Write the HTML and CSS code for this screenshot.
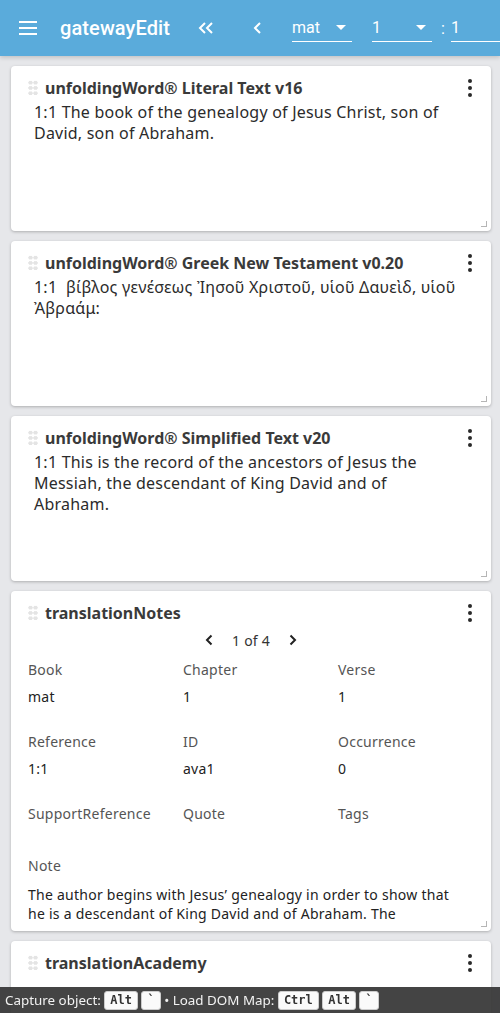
FILE: index.html
```html
<!DOCTYPE html>
<html>
<head>
<meta charset="utf-8">
<link rel="stylesheet" href="styles.css">
</head>
<body>
<header class="appbar">
  <svg class="menu" width="18" height="14" viewBox="0 0 18 14"><path d="M0 1h18M0 7h18M0 13h18" stroke="#fff" stroke-width="2"/></svg>
  <div class="brand">gatewayEdit</div>
  <svg class="dbl" width="16" height="12" viewBox="0 0 16 12"><path d="M7 1L2 6l5 5M14 1L9 6l5 5" fill="none" stroke="#fff" stroke-width="2"/></svg>
  <svg class="sgl" width="8" height="12" viewBox="0 0 8 12"><path d="M7 1L2 6l5 5" fill="none" stroke="#fff" stroke-width="2"/></svg>
  <div class="sel s1"><span>mat</span><i class="tri"></i></div>
  <div class="sel s2"><span>1</span><i class="tri"></i></div>
  <span class="colon">:</span>
  <div class="sel s3"><span>1</span></div>
</header>

<main class="cards">
  <section class="card">
    <div class="card-head">
      <span class="grip"></span>
      <h2>unfoldingWord® Literal Text v16</h2>
      <span class="kebab"><i></i><i></i><i></i></span>
    </div>
    <p class="verse">1:1 The book of the genealogy of Jesus Christ, son of David, son of Abraham.</p>
    <span class="resize"></span>
  </section>

  <section class="card">
    <div class="card-head">
      <span class="grip"></span>
      <h2>unfoldingWord® Greek New Testament v0.20</h2>
      <span class="kebab"><i></i><i></i><i></i></span>
    </div>
    <p class="verse">1:1&nbsp; βίβλος γενέσεως Ἰησοῦ Χριστοῦ, υἱοῦ Δαυεὶδ, υἱοῦ Ἀβραάμ:</p>
    <span class="resize"></span>
  </section>

  <section class="card">
    <div class="card-head">
      <span class="grip"></span>
      <h2>unfoldingWord® Simplified Text v20</h2>
      <span class="kebab"><i></i><i></i><i></i></span>
    </div>
    <p class="verse">1:1 This is the record of the ancestors of Jesus the Messiah, the descendant of King David and of Abraham.</p>
    <span class="resize"></span>
  </section>

  <section class="card notes">
    <div class="card-head">
      <span class="grip"></span>
      <h2>translationNotes</h2>
      <span class="kebab"><i></i><i></i><i></i></span>
    </div>
    <div class="pager">
      <svg width="8" height="12" viewBox="0 0 8 12"><path d="M6.5 1.5L2 6l4.5 4.5" fill="none" stroke="#222" stroke-width="2"/></svg>
      <span>1 of 4</span>
      <svg width="8" height="12" viewBox="0 0 8 12"><path d="M1.5 1.5L6 6l-4.5 4.5" fill="none" stroke="#222" stroke-width="2"/></svg>
    </div>
    <div class="fields">
      <div class="field"><div class="lbl">Book</div><div class="val">mat</div></div>
      <div class="field"><div class="lbl">Chapter</div><div class="val">1</div></div>
      <div class="field"><div class="lbl">Verse</div><div class="val">1</div></div>
      <div class="field"><div class="lbl">Reference</div><div class="val">1:1</div></div>
      <div class="field"><div class="lbl">ID</div><div class="val">ava1</div></div>
      <div class="field"><div class="lbl">Occurrence</div><div class="val">0</div></div>
      <div class="field"><div class="lbl">SupportReference</div><div class="val"></div></div>
      <div class="field"><div class="lbl">Quote</div><div class="val"></div></div>
      <div class="field"><div class="lbl">Tags</div><div class="val"></div></div>
    </div>
    <div class="note">
      <div class="lbl">Note</div>
      <p class="note-text">The author begins with Jesus’ genealogy in order to show that he is a descendant of King David and of Abraham. The</p>
    </div>
    <span class="resize"></span>
  </section>

  <section class="card">
    <div class="card-head">
      <span class="grip"></span>
      <h2>translationAcademy</h2>
      <span class="kebab"><i></i><i></i><i></i></span>
    </div>
  </section>
</main>

<div class="hotkeys">Capture object: <kbd>Alt</kbd> <kbd>`</kbd> • Load DOM Map: <kbd>Ctrl</kbd> <kbd>Alt</kbd> <kbd>`</kbd></div>
</body>
</html>
```
FILE: styles.css
```css
html, body {
  margin: 0;
  padding: 0;
}
body {
  background: #e6e7ea;
  font-family: "Noto Sans", "Open Sans", sans-serif;
  color: #2b2b2b;
  width: 500px;
  height: 1013px;
  overflow: hidden;
}
.appbar {
  height: 56px;
  background: #5aabdb;
  display: flex;
  align-items: center;
  color: #fff;
  font-family: Roboto, sans-serif;
  white-space: nowrap;
  box-shadow: 0 2px 4px rgba(0,0,0,0.15);
}
.menu { margin-left: 19px; flex: none; }
.brand {
  margin-left: 23px;
  font-size: 20px;
  font-weight: 500;
  letter-spacing: 0.1px;
}
.dbl { margin-left: 28px; flex: none; }
.sgl { margin-left: 39px; flex: none; }
.sel {
  height: 26px;
  border-bottom: 1px solid #fff;
  display: flex;
  align-items: center;
  justify-content: space-between;
  font-size: 16px;
  flex: none;
  padding-bottom: 2px;
  box-sizing: border-box;
  position: relative;
  top: 1px;
}
.sel span { line-height: 20px; }
.s1 { width: 60px; margin-left: 31px; padding-right: 6px; }
.s2 { width: 60px; margin-left: 20px; padding-right: 6px; }
.s3 { width: 60px; margin-left: 6px; }
.tri {
  width: 0;
  height: 0;
  border-left: 5px solid transparent;
  border-right: 5px solid transparent;
  border-top: 5px solid #fff;
}
.colon { margin-left: 9px; font-size: 16px; }

.cards {
  display: flex;
  flex-direction: column;
  gap: 10px;
  padding: 10px 9px 0 11px;
}
.card {
  position: relative;
  background: #fff;
  border-radius: 4px;
  box-shadow: 0 1px 3px rgba(0,0,0,0.25);
  height: 165px;
  box-sizing: border-box;
  padding: 10px 0 0 0;
  overflow: hidden;
  flex: none;
}
.card.notes { height: 340px; }
.card-head {
  display: flex;
  align-items: center;
  height: 24px;
  padding-left: 17px;
  padding-right: 19px;
}
.grip {
  width: 10px;
  height: 16px;
  flex: none;
  background-image: radial-gradient(circle, #e4e4e4 2px, transparent 2.2px);
  background-size: 5px 5.3px;
  margin-right: 7px;
}
.card-head h2 {
  margin: 0;
  font-size: 16px;
  font-weight: 700;
  color: #3a3a3a;
  flex: 1;
  white-space: nowrap;
  line-height: 24px;
}
.kebab {
  display: flex;
  flex-direction: column;
  gap: 3px;
  width: 4px;
  flex: none;
}
.kebab i {
  display: block;
  width: 4px;
  height: 4px;
  border-radius: 50%;
  background: #2a2a2a;
}
.verse {
  margin: 2px 26px 0 23px;
  font-size: 16px;
  line-height: 21px;
  letter-spacing: 0.22px;
  color: #2b2b2b;
}
.resize {
  position: absolute;
  right: 4px;
  bottom: 4px;
  width: 5px;
  height: 5px;
  border-right: 1px solid #b5b5b5;
  border-bottom: 1px solid #b5b5b5;
}
.pager {
  display: flex;
  justify-content: center;
  align-items: center;
  gap: 19px;
  margin-top: 4px;
  height: 22px;
  font-size: 14px;
  letter-spacing: 0.2px;
  color: #333;
}
.fields {
  display: grid;
  grid-template-columns: 155px 155px 155px;
  padding-left: 17px;
  row-gap: 26px;
  margin-top: 9px;
}
.field .lbl { height: 27px; }
.lbl {
  font-size: 14px;
  line-height: 19px;
  letter-spacing: 0.25px;
  color: #555;
}
.val {
  font-size: 14px;
  line-height: 19px;
  height: 19px;
  letter-spacing: 0.25px;
  color: #222;
}
.note {
  padding-left: 17px;
  padding-right: 30px;
  margin-top: 6px;
}
.note .lbl { margin-bottom: 10px; }
.note-text {
  margin: 0;
  font-size: 14px;
  line-height: 19px;
  letter-spacing: 0.25px;
  color: #222;
}
.hotkeys {
  position: fixed;
  left: 0;
  right: 0;
  bottom: 0;
  height: 26px;
  background: rgba(52,52,52,0.92);
  color: #f2f2f2;
  font-size: 13.4px;
  line-height: 26px;
  padding-left: 5px;
  white-space: nowrap;
}
kbd {
  display: inline-block;
  background: #fafafa;
  color: #333;
  font-family: "DejaVu Sans Mono", monospace;
  font-weight: 700;
  font-size: 12px;
  line-height: 17px;
  padding: 0 5px;
  border-radius: 3px;
  border: 1px solid #ccc;
  vertical-align: 1px;
}
```
